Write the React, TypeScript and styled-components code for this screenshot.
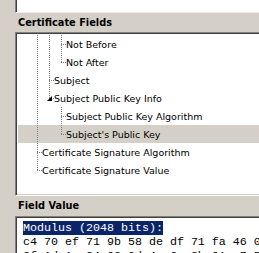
import React from "react";
import styled, { createGlobalStyle } from "styled-components";

const Global = createGlobalStyle`
  html, body { margin: 0; padding: 0; background: #d4d0c8; overflow: hidden; }
  body { width: 259px; height: 253px; }
`;

const Page = styled.div`
  width: 300px;
  height: 253px;
  padding-left: 15px;
  box-sizing: border-box;
  display: flex;
  flex-direction: column;
  font-family: "DejaVu Sans", Verdana, sans-serif;
  color: #000;
`;

const sunken = `
  box-sizing: border-box;
  background: #fff;
  border-style: solid;
  border-width: 1px;
  border-color: #808080 #ffffff #ffffff #808080;
  box-shadow: inset 1px 1px 0 #404040, inset -1px -1px 0 #d4d0c8;
`;

const TopPanel = styled.div`
  flex: none;
  width: 280px;
  height: 13px;
  background: #fff;
  border-left: 1px solid #808080;
  box-shadow: inset 1px 0 0 #404040;
  border-bottom: 1px solid #ecebe6;
  box-sizing: border-box;
`;

const Heading = styled.div<{ $h: number }>`
  flex: none;
  height: ${(p) => p.$h}px;
  line-height: ${(p) => p.$h}px;
  padding-left: 3px;
  font-weight: bold;
  font-size: 9.8px;
`;

const TreeBox = styled.div`
  ${sunken}
  flex: none;
  width: 280px;
  height: 164px;
  padding: 2px;
  overflow: hidden;
`;

const dots = `
  background-image: linear-gradient(to bottom, #808080 50%, transparent 50%);
  background-size: 1px 2px;
  background-repeat: repeat-y;
`;

const Row = styled.div<{ $selected?: boolean }>`
  display: flex;
  align-items: stretch;
  height: 18px;
  padding-left: 19px;
  background: ${(p) => (p.$selected ? "#d4d0c8" : "transparent")};
`;

const Guide = styled.div<{ $on: boolean }>`
  flex: none;
  width: 12px;
  ${(p) => (p.$on ? dots : "")}
`;

const Connector = styled.div<{ $last: boolean }>`
  flex: none;
  width: 5px;
  position: relative;
  &::before {
    content: "";
    position: absolute;
    left: 0;
    top: 0;
    width: 1px;
    height: ${(p) => (p.$last ? "10px" : "18px")};
    ${dots}
  }
  &::after {
    content: "";
    position: absolute;
    left: 0;
    top: 9px;
    width: 5px;
    height: 1px;
    background-image: linear-gradient(to right, #808080 50%, transparent 50%);
    background-size: 2px 1px;
    background-repeat: repeat-x;
  }
`;

const Expander = styled.span`
  position: absolute;
  left: -2px;
  top: 7px;
  width: 0;
  height: 0;
  border-style: solid;
  border-width: 0 0 5px 5px;
  border-color: transparent transparent #000 transparent;
  z-index: 1;
`;

const Label = styled.span`
  font-size: 9.5px;
  line-height: 18px;
  padding-top: 1px;
  white-space: nowrap;
`;

const ValueBox = styled.div`
  ${sunken}
  flex: none;
  width: 280px;
  height: 80px;
  padding: 4px 0 0 7px;
  overflow: hidden;
  font-family: "Liberation Mono", "Courier New", monospace;
  font-size: 11.667px;
  line-height: 14px;
  white-space: pre;
`;

const Sel = styled.span`
  background: #0a246a;
  color: #fff;
`;

type Node = { label: string; guides: boolean[]; last: boolean; expanded?: boolean; selected?: boolean };

const rows: Node[] = [
  { label: "Not Before", guides: [true, true], last: false },
  { label: "Not After", guides: [true, true], last: true },
  { label: "Subject", guides: [true], last: false },
  { label: "Subject Public Key Info", guides: [true], last: true, expanded: true },
  { label: "Subject Public Key Algorithm", guides: [true, false], last: false },
  { label: "Subject's Public Key", guides: [true, false], last: true, selected: true },
  { label: "Certificate Signature Algorithm", guides: [], last: false },
  { label: "Certificate Signature Value", guides: [], last: true },
];

export default function App() {
  return (
    <>
      <Global />
      <Page>
        <TopPanel />
        <Heading $h={19}>Certificate Fields</Heading>
        <TreeBox>
          {rows.map((r) => (
            <Row key={r.label} $selected={r.selected}>
              {r.guides.map((g, i) => (
                <Guide key={i} $on={g} />
              ))}
              <Connector $last={r.last}>{r.expanded && <Expander />}</Connector>
              <Label>{r.label}</Label>
            </Row>
          ))}
        </TreeBox>
        <Heading $h={20}>Field Value</Heading>
        <ValueBox>
          <Sel>Modulus (2048 bits):</Sel>
          {"\nc4 70 ef 71 9b 58 de df 71 fa 46 0f\n3f 1d 1e 84 93 0d 4a 6c 2b 91 e7 55"}
        </ValueBox>
      </Page>
    </>
  );
}
